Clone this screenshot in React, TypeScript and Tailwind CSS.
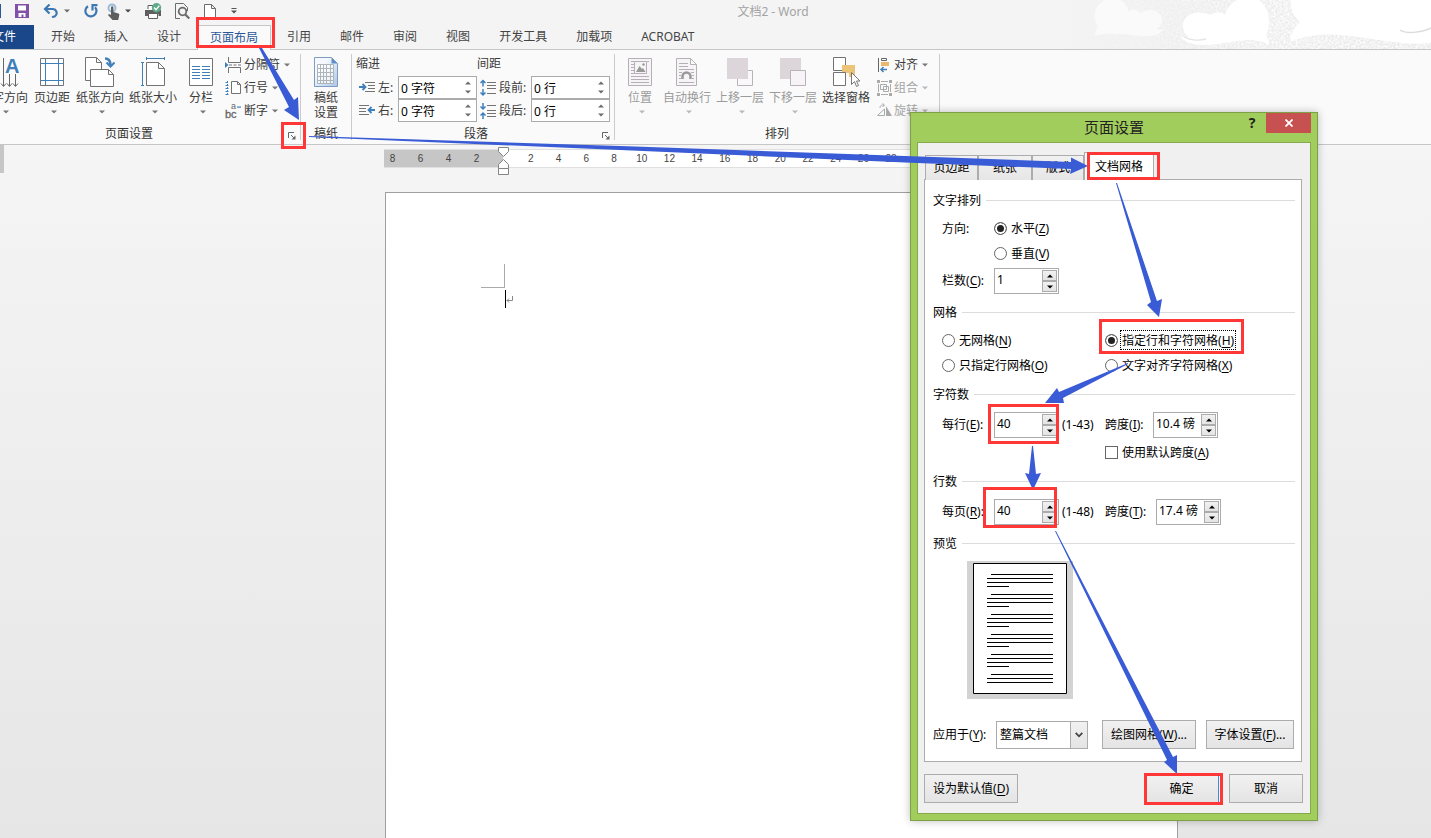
import type { ReactNode } from 'react';

const FONT = "font-['Noto_Sans','Noto_Sans_CJK_SC',sans-serif]";

function Caret({ className = 'text-[#6b6b6b]' }: { className?: string }) {
  return (
    <svg viewBox="0 0 6 4" className={`h-1 w-1.5 shrink-0 ${className}`} aria-hidden="true">
      <path d="M0 0.5h6L3 3.5z" fill="currentColor" />
    </svg>
  );
}

/* ---------- quick access bar ---------- */

function QuickAccess() {
  return (
    <div className="flex h-[22px] w-[251px] shrink-0 items-center">
      <span className="h-3.5 w-px shrink-0 bg-[#2b579a]" />
      <button aria-label="保存" className="ml-3.5 shrink-0">
        <svg width="14" height="14" viewBox="0 0 14 14">
          <path d="M0 0h14v14H0z" fill="#8350a8" />
          <path d="M3 1.500h8v5H3zM3.500 9h7v4h-2v-2.500h-2V13h-3z" fill="#fff" />
        </svg>
      </button>
      <button aria-label="撤消" className="ml-3.5 flex shrink-0 items-center gap-[5px]">
        <svg width="16" height="14" viewBox="0 0 16 14" fill="none" stroke="#3e78b3" strokeWidth="2.200">
          <path d="M2 5h7.500a4 4 0 0 1 2.500 7.200l-3 1" />
          <path d="M6.500 0.500L2 5L6.500 9.500" />
        </svg>
        <Caret />
      </button>
      <button aria-label="恢复" className="ml-3.5 shrink-0">
        <svg width="14" height="14" viewBox="0 0 14 14" fill="none" stroke="#3e78b3" strokeWidth="2.200">
          <path d="M4 2.200A5.500 5.500 0 1 0 11 3.200" />
          <path d="M13.500 1.200H8.500V6.500" />
        </svg>
      </button>
      <button aria-label="触摸模式" className="ml-[9px] flex shrink-0 items-center gap-[5px]">
        <svg width="13" height="17" viewBox="0 0 13 17">
          <circle cx="5" cy="5" r="3.500" fill="none" stroke="#9dbad6" strokeWidth="2" />
          <path d="M4 4.500a1.200 1.200 0 0 1 2.400 0V9l5 1.500c1 .4 1 1 .8 2L11.200 17H5.500L1 12l1-1 2 1z" fill="#5d5d5d" />
        </svg>
        <Caret className="text-[#444]" />
      </button>
      <button aria-label="快速打印" className="ml-3.5 shrink-0">
        <svg width="17" height="17" viewBox="0 0 17 17">
          <path d="M3 6V2.500h6V6" fill="#fff" stroke="#5f5f5f" />
          <path d="M0 7h16v6h-2.500v-2H3v2H0z" fill="#5f5f5f" />
          <path d="M3.500 10.500h9v5h-9z" fill="#fff" stroke="#5f5f5f" />
          <circle cx="11.500" cy="4.700" r="4.700" fill="#5fa98a" />
          <path d="M9 4.500l2 2.200 3.300-4" stroke="#fff" strokeWidth="1.300" fill="none" />
        </svg>
      </button>
      <button aria-label="打印预览" className="ml-[13px] shrink-0">
        <svg width="15" height="16" viewBox="0 0 15 16" fill="none" stroke="#6b6b6b">
          <path d="M5 15.500H.5V.5h8l4 4V8" />
          <circle cx="7.500" cy="8.500" r="3.800" strokeWidth="1.800" />
          <path d="M10.300 11.500l4 4" strokeWidth="2.200" />
        </svg>
      </button>
      <button aria-label="新建" className="ml-3.5 shrink-0">
        <svg width="12" height="15" viewBox="0 0 12 15" fill="#fff" stroke="#6b6b6b">
          <path d="M.5 14.500V.5h7l4 4v10zM7.500.5v4h4" />
        </svg>
      </button>
      <button aria-label="自定义快速访问工具栏" className="ml-[15px] shrink-0">
        <svg width="6" height="6" viewBox="0 0 6 6" fill="#555">
          <path d="M.5 0h5v1h-5zM0 2.500h6L3 5.500z" />
        </svg>
      </button>
    </div>
  );
}

function Clouds() {
  return (
    <svg className="absolute right-0 top-0 h-[49px] w-[371px]" viewBox="0 0 371 49" aria-hidden="true">
      <defs>
        <linearGradient id="sky" x1="0" x2="1" y1="0" y2="0">
          <stop offset="0" stopColor="#f4f4f4" />
          <stop offset="0.35" stopColor="#eeeeee" />
          <stop offset="1" stopColor="#e9e9e9" />
        </linearGradient>
        <linearGradient id="fade" x1="0" x2="1" y1="0" y2="0">
          <stop offset="0" stopColor="#000" />
          <stop offset="0.600" stopColor="#fff" />
        </linearGradient>
        <mask id="fadeMask">
          <path d="M0 0h371v49H0z" fill="url(#fade)" />
        </mask>
        <filter id="grain" x="0" y="0" width="100%" height="100%">
          <feTurbulence type="fractalNoise" baseFrequency="0.5" numOctaves="2" />
          <feColorMatrix type="matrix" values="0 0 0 0 1 0 0 0 0 1 0 0 0 0 1 2.500 0 0 0 -0.800" />
        </filter>
      </defs>
      <path d="M0 0h371v49H0z" fill="url(#sky)" />
      <g mask="url(#fadeMask)">
        <path d="M0 0h371v49H0z" filter="url(#grain)" opacity="0.900" />
      </g>
      <path d="M35 36C34 32 37 29 38 26C31 18 35 4 46 -1h13c6 3 9 8 10 13c3-4 8-3 11 1c9-6 22-3 22 7c0 4-2 7-5 9c3 1 6 0 8-1c-4 5-8 8-17 8c-20 0-38-5-53 0z" fill="#fafafa" />
      <path d="M209 45c0-4-2-7-3-10c6-12 3-28-8-36h-20c-6 4-11 9-13 16c-4-4-10-3-14 0c-15-6-28-1-28 11c0 5 2 9 6 11c-4 1-7 0-9-1c4 6 12 9 26 9c21 0 43-11 63 0z" fill="#fff" />
      <path d="M124 37c5 3 14 4 22 2" fill="none" stroke="#e4e4e4" strokeWidth="1.300" />
      <path d="M231 41c-1-7 4-14 9-19c-6-5-10-13-9-23h141v44c-50 5-91-20-141-2z" fill="#fff" />
      <path d="M340 30c6 4 21 3 31-2" fill="none" stroke="#dcdcdc" strokeWidth="1.500" />
    </svg>
  );
}

/* ---------- ribbon ---------- */

function BigButton({ label, icon, width = 'w-12', disabled = false, caret = true }: { label: string; icon: ReactNode; width?: string; disabled?: boolean; caret?: boolean }) {
  return (
    <button disabled={disabled} className={`flex shrink-0 flex-col items-center whitespace-nowrap ${width} ${disabled ? 'text-[#9b9b9b]' : 'text-[#3b3b3b]'}`}>
      <span className="flex h-[30px] items-center">{icon}</span>
      <span className="mt-[3px] leading-4">{label}</span>
      {caret && (
        <span className="mt-1 flex pl-1">
          <Caret className={disabled ? 'text-[#b9b9b9]' : 'text-[#777]'} />
        </span>
      )}
    </button>
  );
}

function SmallButton({ label, icon, disabled = false }: { label: string; icon: ReactNode; disabled?: boolean }) {
  return (
    <button disabled={disabled} className={`flex h-[23px] items-center whitespace-nowrap ${disabled ? 'text-[#a5a5a5]' : 'text-[#3b3b3b]'}`}>
      {icon}
      <span className="ml-0.5 mr-1">{label}</span>
      <Caret className={disabled ? 'text-[#b9b9b9]' : 'text-[#777]'} />
    </button>
  );
}

function Group({ label, launcher = false, children, className, labelClass = '' }: { label: string; launcher?: boolean; children: ReactNode; className: string; labelClass?: string }) {
  return (
    <section aria-label={label} className={`flex shrink-0 ${className}`}>
      <div className="flex min-w-0 flex-1 flex-col">
        <div className="flex h-[76px] shrink-0">{children}</div>
        <div className="flex h-4 items-center">
          <h2 className={`flex-1 whitespace-nowrap text-center text-[#333] ${labelClass}`}>{label}</h2>
          {launcher && (
            <button aria-label={`${label}选项`} className="mr-0.5 mt-1 flex w-3 justify-center">
              <svg width="8" height="8" viewBox="0 0 8 8" fill="none" stroke="#666">
                <path d="M.5 6V.5H6M3 3l3 3" />
                <path d="M7.500 3.500v4h-4z" fill="#666" stroke="none" />
              </svg>
            </button>
          )}
        </div>
      </div>
      <span className="mt-1 h-[86px] w-px shrink-0 bg-[#cbcbcb]" />
    </section>
  );
}

const blue = '#3f7fba';
const gray = '#737373';

const icons = {
  textDir: (
    <svg width="30" height="30" viewBox="0 0 30 30" fill="none" stroke="#666">
      <path d="M14.500 1v28M20.500 17v12M26.500 17v12" />
      <path d="M12 26.500l2.500 3 2.500-3M18 26.500l2.500 3 2.500-3M24 26.500l2.500 3 2.500-3" />
      <text x="16" y="16" fontSize="20" fontWeight="bold" fill={blue} stroke="none" fontFamily="Liberation Sans">A</text>
    </svg>
  ),
  margins: (
    <svg width="24" height="30" viewBox="0 0 24 30" fill="#fff" stroke={gray}>
      <path d="M.5 1.500h23v27H.5z" />
      <path d="M5.500 2v26M18.500 2v26M1 6.500h22M1 23.500h22" stroke={blue} />
    </svg>
  ),
  orientation: (
    <svg width="30" height="30" viewBox="0 0 30 30" fill="#fff" stroke={gray}>
      <path d="M.5 23.500V.5h11l5 5v18zM11.500.5v5h5" />
      <path d="M5.500 29.500v-17h18l5 5v12zM23.500 12.500v5h5" />
      <path d="M20 1.500c4 0 5.500 3 5.500 7" fill="none" stroke={blue} strokeWidth="2.500" />
      <path d="M21.500 5.500l4 4 4-4" fill="none" stroke={blue} strokeWidth="2" />
    </svg>
  ),
  size: (
    <svg width="26" height="30" viewBox="0 0 26 30" fill="#fff" stroke={gray}>
      <path d="M6.500 28.500v-23h12l6 6v17zM18.500 5.500v6h6" />
      <path d="M6.500 1.500h18M6.500 0v3M24.500 0v3M2.500 6v22M1 5.500h3M1 28.500h3" stroke={blue} />
    </svg>
  ),
  columns: (
    <svg width="24" height="30" viewBox="0 0 24 30" fill="#fff" stroke={gray}>
      <path d="M.5 1.500h23v27H.5z" />
      <path d="M3 9.500h8M3 12.500h8M3 15.500h8M3 18.500h8M3 21.500h8M13 9.500h8M13 12.500h8M13 15.500h8M13 18.500h8M13 21.500h8" stroke={blue} />
    </svg>
  ),
  breaks: (
    <svg width="17" height="16" viewBox="0 0 17 16" fill="none" stroke={gray}>
      <path d="M3.500 0v5.500h12V0M3.500 16v-5.500h12V16M4 8h3M8.500 8h3M13 8h3" />
      <path d="M0 5l3.500 3L0 11z" fill={blue} stroke="none" />
    </svg>
  ),
  lineNo: (
    <svg width="17" height="16" viewBox="0 0 17 16" fill="#fff" stroke={gray}>
      <path d="M6.500 13.500v-12h6l3 3v9zM12.500 1.500v3h3" />
      <path d="M.5 2.500h1.500M.5 5.500h3M.5 8.500h3M.5 11.500h3M.5 14.500h3" stroke={blue} />
      <path d="M2.500 1v14" stroke={blue} strokeDasharray="2 1" />
    </svg>
  ),
  hyphen: (
    <svg width="17" height="16" viewBox="0 0 17 16" fill="#666" fontFamily="Liberation Sans">
      <text x="0" y="15" fontSize="11" stroke="#666" strokeWidth=".3">bc</text>
      <text x="6" y="6" fontSize="9">a</text>
      <path d="M12 3.500h4v1.200h-4z" fill={blue} />
    </svg>
  ),
  manuscript: (
    <svg width="24" height="30" viewBox="0 0 24 30">
      <defs>
        <linearGradient id="sheet" x1="0" x2="1" y1="0" y2="1">
          <stop offset="0.3" stopColor="#f5f9ff" />
          <stop offset="1" stopColor="#aac6e8" />
        </linearGradient>
      </defs>
      <path d="M.5.500h17l6 6v23H.5z" fill="url(#sheet)" stroke="#7f9cc0" />
      <path d="M17.500.5v6h6z" fill="#5d8fc9" />
      <path d="M3.500 7.500h16v4h-16zM3.500 11.500h16v4h-16zM3.500 15.500h16v4h-16zM3.500 19.500h16v4h-16zM3.500 23.500h16v3h-16zM6.500 7v19M9.500 7v19M12.500 7v19M16.500 7v19" fill="#fff" fillOpacity="0.700" stroke="#adb4ba" />
    </svg>
  ),
  position: (
    <svg width="24" height="30" viewBox="0 0 24 30" fill="#f6f4f6" stroke="#b5b0b5">
      <path d="M.5 1.500h23v27H.5z" />
      <path d="M3 4.500h3M3 7.500h3M3 10.500h3M3 13.500h3M3 16.500h3M3 19.500h18M3 22.500h18M3 25.500h18M19 4.500h2" />
      <path d="M6.500 4.500h12v12h-12z" />
      <path d="M8 15l3.500-6 2.500 3 1-1 2.500 4z" fill="#999" stroke="none" />
      <circle cx="15.500" cy="7.500" r="1.200" fill="#999" stroke="none" />
    </svg>
  ),
  wrap: (
    <svg width="22" height="30" viewBox="0 0 22 30" fill="#f6f4f6" stroke="#b5b0b5">
      <path d="M.5 28.500v-27h14l6 6v21zM14.500 1.500v6h6" />
      <path d="M3 6.500h9M3 9.500h9M3 12.500h15M3 15.500h3M3 18.500h2M15 15.500h3M16 18.500h2M3 21.500h2M16 21.500h2M3 25.500h15" />
      <path d="M6.500 22v-2.500a4 4 0 0 1 8 0V22" fill="none" stroke="#999" strokeWidth="2.500" />
    </svg>
  ),
  forward: (
    <svg width="28" height="30" viewBox="0 0 28 30" fill="#faf8fa" stroke="#b9b2b9">
      <path d="M11.500 13.500h15v15h-15z" />
      <path d="M1 1h21v21H1z" fill="#dcd6db" stroke="none" />
    </svg>
  ),
  backward: (
    <svg width="28" height="30" viewBox="0 0 28 30" fill="#f6f4f6" stroke="#b9b2b9">
      <path d="M1 1h21v21H1z" fill="#dcd6db" stroke="none" />
      <path d="M11.500 13.500h15v15h-15z" />
    </svg>
  ),
  pane: (
    <svg width="28" height="30" viewBox="0 0 28 30" fill="#fff" stroke={gray}>
      <path d="M1.500.5h12v13h-12z" />
      <path d="M10 8h13v12h-6v-4h-7z" fill="#ecc478" stroke="none" />
      <path d="M1.500 15.500h12v13h-12z" />
      <path d="M19.500 15.500v12l3-3 2 5 2-1-2-4.500h3.500z" stroke="#777" />
    </svg>
  ),
  align: (
    <svg width="15" height="16" viewBox="0 0 15 16" fill="none" stroke="#666">
      <path d="M1.500 1v14M4.500 1.500h5v2h-5z" />
      <path d="M4 5h8v4H4z" fill="#ecb96a" stroke="none" />
      <path d="M4 12.500h6M6.500 10L4 12.500 6.500 15" stroke={blue} strokeWidth="1.500" />
    </svg>
  ),
  group: (
    <svg width="15" height="16" viewBox="0 0 15 16" fill="none" stroke="#aaa">
      <path d="M0 0h3v3H0zM12 0h3v3h-3zM0 13h3v3H0zM12 13h3v3h-3z" fill="#aaa" stroke="none" />
      <path d="M1.500 4v8M4 14.500h7M4 1.500h7M13.500 4v8M3.500 4.500h6v5h-6zM6.500 6.500h5v5h-5z" />
    </svg>
  ),
  rotate: (
    <svg width="15" height="16" viewBox="0 0 15 16" fill="none" stroke="#aaa">
      <path d="M0.500 12.500h7V6z" />
      <path d="M9 3v10h6z" fill="#aaa" stroke="none" />
      <path d="M3 5c0-3 2-3 4-3M5.500.5L7.500 2l-2 2" />
    </svg>
  ),
  indentLeft: (
    <svg width="16" height="11" viewBox="0 0 16 11" fill="none" stroke={gray}>
      <path d="M6 .5h10M9 3.500h7M9 6.500h7M6 9.500h10" />
      <path d="M0 5h6M3.500 2L6.500 5l-3 3" stroke={blue} strokeWidth="1.800" />
    </svg>
  ),
  indentRight: (
    <svg width="16" height="11" viewBox="0 0 16 11" fill="none" stroke={gray}>
      <path d="M0 .5h10M0 3.500h7M0 6.500h7M0 9.500h10" />
      <path d="M16 5h-6M12.500 2l-3 3 3 3" stroke={blue} strokeWidth="1.800" />
    </svg>
  ),
  before: (
    <svg width="16" height="18" viewBox="0 0 16 18" fill="none" stroke={gray}>
      <path d="M7 3.500h9M7 6.500h9M7 9.500h9M7 14.500h9" />
      <path d="M3 7.500V1.500M.5 4L3 1.500 5.500 4M3 10v6M.5 13.500L3 16l2.500-2.500" stroke={blue} strokeWidth="1.500" />
    </svg>
  ),
  after: (
    <svg width="16" height="18" viewBox="0 0 16 18" fill="none" stroke={gray}>
      <path d="M7 3.500h9M7 8.500h9M7 11.500h9M7 14.500h9" />
      <path d="M3 1v6M.5 4.500L3 7l2.500-2.500M3 17v-6M.5 13.500L3 11l2.500 2.500" stroke={blue} strokeWidth="1.500" />
    </svg>
  ),
};

function RibbonSpin({ id, label, icon, value, labelWidth }: { id: string; label: string; icon: ReactNode; value: string; labelWidth: string }) {
  return (
    <div className="flex h-[23px] items-center">
      {icon}
      <label htmlFor={id} className={`ml-[3px] shrink-0 whitespace-nowrap text-[#3b3b3b] ${labelWidth}`}>{label}</label>
      <div className="flex h-full w-[79px] items-center border border-[#ababab] bg-white">
        <input id={id} defaultValue={value} className="h-full w-0 flex-1 bg-transparent px-0.5 text-black outline-none" />
        <div className="flex h-full w-4 flex-col items-center justify-between py-1">
          <button aria-label={`${label}增加`} className="flex rotate-180"><Caret /></button>
          <button aria-label={`${label}减少`} className="flex"><Caret /></button>
        </div>
      </div>
    </div>
  );
}

function Ribbon() {
  return (
    <div className="flex h-[95px] overflow-hidden border-b border-[#c6c6c6] bg-[#fafafa]">
      <Group label="页面设置" launcher className="w-[301px]" labelClass="pr-7">
        <div className="-ml-5 flex gap-[5px] pt-[7px]">
          <BigButton label="文字方向" icon={icons.textDir} />
          <BigButton label="页边距" icon={icons.margins} width="w-[38px]" />
          <BigButton label="纸张方向" icon={icons.orientation} />
          <BigButton label="纸张大小" icon={icons.size} />
          <BigButton label="分栏" icon={icons.columns} width="w-[38px]" />
          <div className="-mt-[4px] flex flex-col">
            <SmallButton label="分隔符" icon={icons.breaks} />
            <SmallButton label="行号" icon={icons.lineNo} />
            <SmallButton label="断字" icon={icons.hyphen} />
          </div>
        </div>
      </Group>
      <Group label="稿纸" className="w-[51px]">
        <div className="flex flex-1 justify-center pt-[7px]">
          <button className="flex flex-col items-center text-[#3b3b3b]">
            {icons.manuscript}
            <span className="mt-[3px] w-6 leading-[15px]">稿纸设置</span>
          </button>
        </div>
      </Group>
      <Group label="段落" launcher className="w-[263px]">
        <div className="flex gap-[3px] pl-1 pt-1.5">
          <div>
            <h3 className="mb-1 leading-4 text-[#3b3b3b]">缩进</h3>
            <div className="pl-[3px]">
              <RibbonSpin id="indent-left" label="左:" icon={icons.indentLeft} value="0 字符" labelWidth="w-5" />
              <RibbonSpin id="indent-right" label="右:" icon={icons.indentRight} value="0 字符" labelWidth="w-5" />
            </div>
          </div>
          <div>
            <h3 className="-ml-[3px] mb-1 leading-4 text-[#3b3b3b]">间距</h3>
            <RibbonSpin id="space-before" label="段前:" icon={icons.before} value="0 行" labelWidth="w-8" />
            <RibbonSpin id="space-after" label="段后:" icon={icons.after} value="0 行" labelWidth="w-8" />
          </div>
        </div>
      </Group>
      <Group label="排列" className="w-[325px]">
        <div className="flex gap-[5px] pl-[7px] pt-[7px]">
          <BigButton label="位置" icon={icons.position} width="w-9" disabled />
          <BigButton label="自动换行" icon={icons.wrap} disabled />
          <BigButton label="上移一层" icon={icons.forward} disabled />
          <BigButton label="下移一层" icon={icons.backward} disabled />
          <BigButton label="选择窗格" icon={icons.pane} caret={false} />
          <div className="-mt-[4px] flex flex-col pl-0.5">
            <SmallButton label="对齐" icon={icons.align} />
            <SmallButton label="组合" icon={icons.group} disabled />
            <SmallButton label="旋转" icon={icons.rotate} disabled />
          </div>
        </div>
      </Group>
    </div>
  );
}

const tabs = ['开始', '插入', '设计', '页面布局', '引用', '邮件', '审阅', '视图', '开发工具', '加载项', 'ACROBAT'];

function Tabs() {
  return (
    <nav className="relative flex h-6 items-stretch whitespace-nowrap text-[#444]">
      <a href="#file" className="flex w-[34px] shrink-0 items-center justify-end bg-[#19478a] pr-[18px] text-white">文件</a>
      <div className="flex gap-[29px] pl-[17px]">
        {tabs.map((t) =>
          t === '页面布局' ? (
            <a key={t} href={`#${t}`} aria-current="page" className="-mx-[13px] -mb-px flex items-center border border-b-0 border-[#c6c6c6] bg-[#fafafa] px-3 text-[#2b579a]">{t}</a>
          ) : (
            <a key={t} href={`#${t}`} className="flex items-center">{t}</a>
          ),
        )}
      </div>
    </nav>
  );
}

/* ---------- document area ---------- */

function Ruler() {
  return (
    <div className="relative flex h-[19px] w-[794px] border-y border-[#e0e0e0] bg-white font-['Liberation_Sans',sans-serif] text-[10px] leading-[17px] text-[#444]">
      <div className="grid w-[119px] shrink-0 grid-cols-4 bg-[#c6c6c6] pr-[7px] text-center">
        {[8, 6, 4, 2].map((n) => <span key={n} className="-ml-[11px]">{n}</span>)}
      </div>
      <div className="ml-3.5 grid w-[388px] grid-cols-14 text-center">
        {[2, 4, 6, 8, 10, 12, 14, 16, 18, 20, 22, 24, 26, 28].map((n) => <span key={n}>{n}</span>)}
      </div>
      <svg className="absolute -top-[3px] left-[114px]" width="11" height="28" viewBox="0 0 11 28" fill="#fff" stroke="#858585" aria-hidden="true">
        <path d="M.5.500h10v4L5.500 9.500.5 4.500zM5.500 12.500l5 5v4H.5v-4zM.5 21.500h10v6H.5z" />
      </svg>
    </div>
  );
}

function Workspace() {
  return (
    <main className="flex flex-1 bg-linear-to-b from-[#f5f5f5] to-[#e6e6e6]">
      <div className="h-7 w-1 shrink-0 bg-[#c6c6c6]" />
      <div className="flex flex-1 flex-col pl-[380px] pt-1">
        <Ruler />
        <article aria-label="文档" className="ml-px mt-6 flex w-[793px] flex-1 flex-col border border-b-0 border-[#9f9f9f] bg-white pl-[95px] pt-[71px]">
          <span className="h-6 w-6 border-b border-r border-[#aaa]" />
          <div className="ml-6 mt-0.5 flex">
            <span className="h-[18px] w-px bg-black" />
            <svg className="mt-1.5" width="7" height="8" viewBox="0 0 7 8" fill="none" stroke="#888" aria-hidden="true">
              <path d="M6.500 0v4.500H1M3 2.500l-2 2 2 2" />
            </svg>
          </div>
        </article>
      </div>
    </main>
  );
}

/* ---------- dialog ---------- */

const btn = 'border border-[#acacac] bg-linear-to-b from-[#f1f1f1] to-[#e4e4e4] text-black whitespace-nowrap';

function Key({ text, k, end = '' }: { text: string; k: string; end?: string }) {
  return <span className="whitespace-nowrap">{text}(<u className="underline-offset-2">{k}</u>){end}</span>;
}

function Heading({ children }: { children: ReactNode }) {
  return (
    <h3 className="flex h-4 items-center gap-[5px] whitespace-nowrap">
      <span className="pt-0.5">{children}</span>
      <span className="h-px flex-1 bg-[#dcdcdc]" />
    </h3>
  );
}

function Radio({ name, text, k, checked = false, focus = false }: { name: string; text: string; k: string; checked?: boolean; focus?: boolean }) {
  return (
    <label className="flex h-4 items-center gap-0.5">
      <input type="radio" name={name} defaultChecked={checked} className="size-[13px] shrink-0 appearance-none rounded-full border border-[#666] bg-white checked:bg-[#222] checked:shadow-[inset_0_0_0_2px_#fff]" />
      <span className={`border border-dotted px-px pt-0.5 ${focus ? 'border-black' : 'border-transparent'}`}><Key text={text} k={k} /></span>
    </label>
  );
}

function Spin({ id, value }: { id: string; value: string }) {
  return (
    <div className="flex h-[26px] w-[65px] shrink-0 border border-[#ababab] bg-white p-px">
      <input id={id} defaultValue={value} className="w-0 flex-1 bg-transparent pb-0.5 pl-px outline-none" />
      <div className="flex w-[15px] flex-col">
        <button aria-label="增加" className={`flex flex-1 items-center justify-center ${btn}`}><Caret className="rotate-180 text-black" /></button>
        <button aria-label="减少" className={`flex flex-1 items-center justify-center ${btn}`}><Caret className="text-black" /></button>
      </div>
    </div>
  );
}

function PreviewPage() {
  const blocks = [0, 1, 2, 3, 4, 5];
  return (
    <div className="ml-[34px] mt-2.5 flex h-[138px] w-[106px] justify-center bg-[#d3d3d3] pt-0.5">
      <svg width="94" height="131" viewBox="0 0 94 131" role="img" aria-label="预览">
        <path d="M.5.500h93v130H.5z" fill="#fff" stroke="#000" />
        {blocks.map((b) => (
          <path key={b} d={`M18 ${11.5 + b * 20}h62M14 ${15.5 + b * 20}h66M14 ${19.5 + b * 20}h66${b < 5 ? `M14 ${23.5 + b * 20}h22` : ''}`} stroke="#000" />
        ))}
      </svg>
    </div>
  );
}

function SpinRow({ id, text, k, value, range, k2, value2, w2 }: { id: string; text: string; k: string; value: string; range: string; k2: string; value2: string; w2: string }) {
  return (
    <div className="mt-2.5 flex h-[26px] items-center pl-[9px]">
      <label htmlFor={id} className="w-[52px] shrink-0"><Key text={text} k={k} end=":" /></label>
      <Spin id={id} value={value} />
      <span className="ml-[3px] w-[43px] shrink-0">{range}</span>
      <label htmlFor={`${id}-pitch`} className={`shrink-0 ${w2}`}><Key text="跨度" k={k2} end=":" /></label>
      <Spin id={`${id}-pitch`} value={value2} />
    </div>
  );
}

function Dialog() {
  const inactive = 'h-[25px] border border-b-0 border-[#acacac] bg-linear-to-b from-[#f1f1f1] to-[#e6e6e6]';
  return (
    <div role="dialog" aria-label="页面设置" className="absolute left-[910px] top-[112px] w-[408px] border border-[#7ea046] bg-[#a1cd5d] px-1.5 pb-1.5 text-black shadow-[0_0_8px_rgba(0,0,0,0.25)]">
      <div className="flex h-[29px]">
        <h1 className="flex-1 pl-[73px] pt-0.5 text-center text-[15px] leading-6 text-[#222]">页面设置</h1>
        <div className="flex">
          <button aria-label="帮助" className="h-5 w-7 text-sm font-bold text-[#222]">?</button>
          <button aria-label="关闭" className="flex h-5 w-[45px] items-center justify-center bg-[#c75050]">
            <svg width="8" height="8" viewBox="0 0 8 8" stroke="#fff" strokeWidth="1.800"><path d="M.5.500l7 7M7.500.5l-7 7" /></svg>
          </button>
        </div>
      </div>
      <div className="border border-[#86a94c] bg-[#f0f0f0] pb-2.5 pl-1.5 pr-2 pt-[9px]">
        <div role="tablist" className="relative -mb-px flex h-7 items-end pl-px">
          <button role="tab" className={`w-[53px] ${inactive}`}>页边距</button>
          <button role="tab" className={`w-[54px] ${inactive}`}>纸张</button>
          <button role="tab" className={`w-[52px] ${inactive}`}>版式</button>
          <button role="tab" aria-selected="true" className="h-7 w-[70px] border border-b-0 border-[#acacac] bg-white">文档网格</button>
        </div>
        <div className="border border-[#acacac] bg-white pb-3 pl-2 pr-1.5 pt-3">
          <Heading>文字排列</Heading>
          <div className="mt-3 flex pl-[9px]">
            <span className="w-[52px] pt-px leading-4">方向:</span>
            <div className="flex flex-col gap-[9px]">
              <Radio name="direction" text="水平" k="Z" checked />
              <Radio name="direction" text="垂直" k="V" />
            </div>
          </div>
          <div className="mt-[7px] flex items-center pl-[9px]">
            <label htmlFor="cols" className="w-[52px]"><Key text="栏数" k="C" end=":" /></label>
            <Spin id="cols" value="1" />
          </div>
          <div className="mt-2.5"><Heading>网格</Heading></div>
          <div className="mt-3 grid grid-cols-[163px_1fr] gap-y-[9px] pl-[9px]">
            <Radio name="grid" text="无网格" k="N" />
            <Radio name="grid" text="指定行和字符网格" k="H" checked focus />
            <Radio name="grid" text="只指定行网格" k="O" />
            <Radio name="grid" text="文字对齐字符网格" k="X" />
          </div>
          <div className="mt-[13px]"><Heading>字符数</Heading></div>
          <SpinRow id="chars" text="每行" k="E" value="40" range="(1-43)" k2="I" value2="10.4 磅" w2="w-12" />
          <label className="ml-[172px] mt-1.5 flex h-4 items-center gap-1">
            <input type="checkbox" className="size-[13px] shrink-0 appearance-none border border-[#666] bg-white checked:bg-[#444]" />
            <span className="pt-0.5"><Key text="使用默认跨度" k="A" /></span>
          </label>
          <div className="mt-[13px]"><Heading>行数</Heading></div>
          <SpinRow id="lines" text="每页" k="R" value="40" range="(1-48)" k2="T" value2="17.4 磅" w2="w-[51px]" />
          <div className="mt-2.5"><Heading>预览</Heading></div>
          <PreviewPage />
          <div className="mt-[21px] flex h-[29px] items-center">
            <label htmlFor="apply" className="w-[63px] shrink-0"><Key text="应用于" k="Y" end=":" /></label>
            <div className="relative h-7 w-[92px] shrink-0">
              <select id="apply" className="h-full w-full appearance-none border border-[#ababab] bg-white pl-[3px]">
                <option>整篇文档</option>
              </select>
              <span className={`pointer-events-none absolute inset-y-0 right-0 flex w-[18px] items-center justify-center ${btn}`}>
                <svg width="8" height="6" viewBox="0 0 8 6" fill="none" stroke="#444" strokeWidth="1.800"><path d="M.7.8L4 4.300 7.300.8" /></svg>
              </span>
            </div>
            <button className={`ml-3.5 h-full w-[94px] shrink-0 ${btn}`}><Key text="绘图网格" k="W" end="..." /></button>
            <button className={`ml-2.5 h-full w-[88px] shrink-0 ${btn}`}><Key text="字体设置" k="F" end="..." /></button>
          </div>
        </div>
        <div className="-mr-px mt-3 flex h-[29px]">
          <button className={`w-[94px] ${btn}`}><Key text="设为默认值" k="D" /></button>
          <button className="ml-auto w-[75px] whitespace-nowrap border border-[#3c8edd] bg-linear-to-b from-[#f1f1f1] to-[#e4e4e4]">确定</button>
          <button className={`ml-2.5 w-[74px] ${btn}`}>取消</button>
        </div>
      </div>
    </div>
  );
}

/* ---------- tutorial marks drawn over the window ---------- */

const boxes: [number, number, number, number][] = [
  [196, 17, 275, 48],
  [281, 122, 306, 149],
  [1087, 152, 1160, 180],
  [1099, 319, 1244, 354],
  [988, 404, 1059, 444],
  [983, 487, 1057, 528],
  [1144, 773, 1223, 805],
];

const arrows = [
  '258,46 289,107 284,110 299,120 298,97 294,100 262,48',
  '309,137 620,150 905,162.5 1071,169 1070,174 1088,166 1071,157.5 1071,162 905,156 620,146 309,136',
  '1116,183 1151,302 1147,305 1159,317 1162,299 1157,301 1117,183',
  '1128,363 1059,392 1057,388 1045,403 1064,403 1063,398 1128,364',
  '1032,446 1029,474 1025,473 1033,490 1041,473 1036,474 1033,446',
  '1055,531 1167,760 1164,762 1177,774 1177,755 1173,757 1056,531',
];

function Marks() {
  return (
    <svg className="pointer-events-none absolute left-0 top-0" width="1431" height="838" viewBox="0 0 1431 838" aria-hidden="true">
      {arrows.map((p) => <polygon key={p} points={p} fill="#395bd6" />)}
      {boxes.map(([x1, y1, x2, y2]) => (
        <rect key={`${x1}-${y1}`} x={x1 + 1.5} y={y1 + 1.5} width={x2 - x1 - 3} height={y2 - y1 - 3} fill="none" stroke="#ff3737" strokeWidth="3" />
      ))}
    </svg>
  );
}

export default function App() {
  return (
    <div className={`relative flex min-h-screen flex-col overflow-hidden text-xs ${FONT}`}>
      <header className="relative border-b border-[#c6c6c6] bg-[#f4f4f4]">
        <Clouds />
        <div className="relative flex h-[25px] items-start">
          <QuickAccess />
          <div className="flex-1 whitespace-nowrap pr-[136px] text-center leading-6 text-[#a3a3a3]">文档2 - Word</div>
        </div>
        <Tabs />
      </header>
      <Ribbon />
      <Workspace />
      <Dialog />
      <Marks />
    </div>
  );
}
